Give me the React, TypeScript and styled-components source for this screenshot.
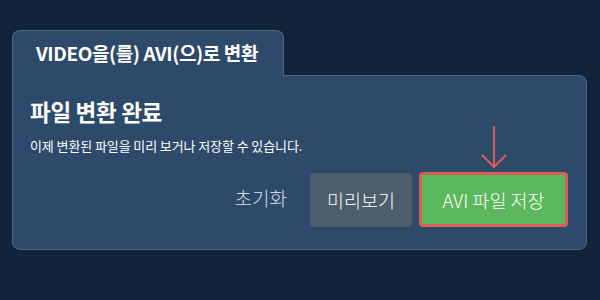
import React from "react";
import styled, { createGlobalStyle } from "styled-components";

const GlobalStyle = createGlobalStyle`
    html, body {
        margin: 0;
        padding: 0;
        background: #12233a;
        font-family: "Noto Sans CJK KR", "Noto Sans", sans-serif;
    }
`;

const Page = styled.div`
    width: 600px;
    height: 300px;
    box-sizing: border-box;
    padding: 30px 13px 0 12px;
`;

const Tab = styled.div`
    position: relative;
    z-index: 1;
    display: inline-flex;
    align-items: center;
    width: 272px;
    height: 46px;
    box-sizing: border-box;
    padding: 0 0 2px 23px;
    background: #2d4a6b;
    border: 1px solid #4c6888;
    border-bottom: none;
    border-radius: 8px 8px 0 0;
    margin-bottom: -1px;
    color: #ffffff;
    font-size: 19px;
    font-weight: 700;
    letter-spacing: -0.4px;
    white-space: nowrap;
`;

const Panel = styled.section`
    position: relative;
    height: 175px;
    box-sizing: border-box;
    padding: 20px 18px 0 17px;
    background: #2d4a6b;
    border: 1px solid #4c6888;
    border-radius: 0 8px 8px 8px;
    color: #ffffff;
`;

const Title = styled.h2`
    margin: 0;
    font-size: 22.5px;
    font-weight: 700;
    line-height: 30px;
    letter-spacing: -0.3px;
`;

const Description = styled.p`
    margin: 10px 0 0;
    font-size: 13px;
    line-height: 20px;
    letter-spacing: -0.1px;
`;

const Actions = styled.div`
    display: flex;
    justify-content: flex-end;
    align-items: center;
    gap: 7px;
    margin-top: 16px;
`;

const TextButton = styled.button`
    background: none;
    border: none;
    padding: 0 16px 4px 0;
    color: #d6dde6;
    font-family: inherit;
    font-size: 19px;
    font-weight: 300;
    cursor: pointer;
`;

const Button = styled.button<{ $variant: "gray" | "green" }>`
    position: relative;
    width: ${p => (p.$variant === "green" ? "149px" : "102px")};
    height: ${p => (p.$variant === "green" ? "55px" : "54px")};
    box-sizing: border-box;
    padding: 0;
    border-radius: 4px;
    border: ${p => (p.$variant === "green" ? "3px solid #dc5c59" : "none")};
    background: ${p => (p.$variant === "green" ? "#5cb85c" : "#4d5d6e")};
    color: #ffffff;
    font-family: inherit;
    font-size: 18.5px;
    font-weight: 300;
    white-space: nowrap;
    cursor: pointer;
`;

const Arrow = styled.svg`
    position: absolute;
    left: 50%;
    top: -50px;
    transform: translateX(-50%);
    overflow: visible;
`;

export default function App() {
    return (
        <>
            <GlobalStyle />
            <Page>
                <Tab>VIDEO을(를) AVI(으)로 변환</Tab>
                <Panel>
                    <Title>파일 변환 완료</Title>
                    <Description>이제 변환된 파일을 미리 보거나 저장할 수 있습니다.</Description>
                    <Actions>
                        <TextButton>초기화</TextButton>
                        <Button $variant="gray">미리보기</Button>
                        <Button $variant="green">
                            AVI 파일 저장
                            <Arrow width="28" height="44" viewBox="0 0 28 44">
                                <path d="M14 1 V42 M2 30 L14 42 L26 30" fill="none" stroke="#dc5c59" strokeWidth="2" />
                            </Arrow>
                        </Button>
                    </Actions>
                </Panel>
            </Page>
        </>
    );
}
